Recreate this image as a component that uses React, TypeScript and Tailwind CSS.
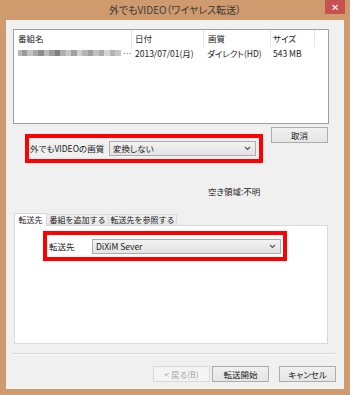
import { ReactNode } from 'react'

const Chevron = () => (
    <svg width="7" height="5" viewBox="0 0 7 5" className="shrink-0">
        <path d="M1 1 L3.5 3.5 L6 1" fill="none" stroke="#555" strokeWidth="1.2" />
    </svg>
)

const Select = ({ value, className }: { value: string; className: string }) => (
    <div
        className={`flex h-[15px] items-center justify-between border border-[#acacac] bg-gradient-to-b from-[#f2f2f2] to-[#e3e3e3] pl-[3px] pr-[4px] ${className}`}
    >
        <span>{value}</span>
        <Chevron />
    </div>
)

const Button = ({ children, className = '' }: { children: ReactNode; className?: string }) => (
    <div
        className={`flex h-[16px] w-[57px] items-center justify-center border border-[#acacac] bg-gradient-to-b from-[#f0f0f0] to-[#e5e5e5] ${className}`}
    >
        {children}
    </div>
)

const blurShades = [
    'w-[4px] bg-[#b8b8b8]',
    'w-[5px] bg-[#9a9a9a]',
    'w-[6px] bg-[#c4c4c4]',
    'w-[5px] bg-[#a8a8a8]',
    'w-[6px] bg-[#8c8c8c]',
    'w-[5px] bg-[#bdbdbd]',
    'w-[6px] bg-[#9c9c9c]',
    'w-[5px] bg-[#7f7f7f]',
    'w-[6px] bg-[#b0b0b0]',
    'w-[5px] bg-[#c8c8c8]',
    'w-[6px] bg-[#a0a0a0]',
    'w-[5px] bg-[#d0d0d0]',
    'w-[6px] bg-[#b5b5b5]',
    'w-[5px] bg-[#9e9e9e]',
    'w-[6px] bg-[#c0c0c0]',
    'w-[5px] bg-[#aaaaaa]',
    'w-[6px] bg-[#d4d4d4]',
    'w-[5px] bg-[#b2b2b2]',
    'w-[6px] bg-[#c6c6c6]',
]

const App = () => {
    return (
        <div className="flex h-[395px] w-[350px] flex-col bg-[#cf9b6e] font-['Noto_Sans_CJK_JP',sans-serif] text-[8.5px] leading-none text-[#222] [font-feature-settings:'palt']">
            {/* title bar */}
            <div className="relative flex h-[20px] shrink-0 items-center justify-center">
                <span className="text-[10px] text-[#3a3a3a]">外でもVIDEO（ワイヤレス転送）</span>
                <div className="absolute right-[5px] top-0 flex h-[14px] w-[20px] items-center justify-center bg-[#c75050] text-[10px] text-white">
                    ✕
                </div>
            </div>

            <div className="mx-[6px] flex h-[369px] flex-col bg-[#f0f0f0]">
                {/* list */}
                <div className="ml-[7px] mt-[9px] flex h-[95px] w-[316px] flex-col border border-[#9a9ea6] bg-white">
                    <div className="flex h-[17px] items-center">
                        <div className="flex h-full w-[118px] items-center border-r border-[#e5e5e5] pl-[4px]">番組名</div>
                        <div className="flex h-full w-[72px] items-center border-r border-[#e5e5e5] pl-[3px]">日付</div>
                        <div className="flex h-full w-[67px] items-center border-r border-[#e5e5e5] pl-[4px]">画質</div>
                        <div className="flex h-full w-[44px] items-center border-r border-[#e5e5e5] pl-[2px]">サイズ</div>
                    </div>
                    <div className="flex h-[12px] items-center">
                        <div className="flex w-[118px] items-center pl-[4px]">
                            <div className="flex h-[6px] blur-[0.6px]">
                                {blurShades.map((c, i) => (
                                    <div key={i} className={`h-full ${c}`} />
                                ))}
                            </div>
                            <span className="ml-[2px] text-[#666]">…</span>
                        </div>
                        <div className="w-[72px] pl-[3px]">2013/07/01(月)</div>
                        <div className="w-[67px] pl-[3px]">ダイレクト(HD)</div>
                        <div className="w-[44px] pl-[2px]">543 MB</div>
                    </div>
                </div>

                {/* quality row */}
                <div className="flex items-start">
                    <div className="ml-[19px] mt-[10px] flex h-[29px] w-[238px] items-center border-[4px] border-[#ff0000] pl-[1px] pr-[3px]">
                        <span className="w-[79px]">外でもVIDEOの画質</span>
                        <Select value="変換しない" className="flex-1" />
                    </div>
                    <Button className="ml-[8px] mt-[3px] h-[15px] w-[56px]">取消</Button>
                </div>

                <div className="mt-[22px] h-[12px] pl-[202px] leading-[12px]">空き領域:不明</div>

                {/* tabs */}
                <div className="ml-[8px] mt-[16px] flex h-[12px] items-end [font-feature-settings:normal] text-[8px]">
                    <div className="relative z-10 -mb-px flex h-[13px] w-[33px] items-center justify-center border border-b-0 border-[#d9d9d9] bg-white">
                        転送先
                    </div>
                    <div className="flex h-[11px] w-[62px] items-center justify-center border border-b-0 border-l-0 border-[#d9d9d9] bg-gradient-to-b from-[#f0f0f0] to-[#e5e5e5]">
                        番組を追加する
                    </div>
                    <div className="flex h-[11px] w-[68px] items-center justify-center border border-b-0 border-l-0 border-[#d9d9d9] bg-gradient-to-b from-[#f0f0f0] to-[#e5e5e5]">
                        転送先を参照する
                    </div>
                </div>
                <div className="ml-[8px] h-[119px] w-[314px] border border-[#d9d9d9] bg-white">
                    <div className="ml-[28px] mt-[5px] flex h-[30px] w-[244px] items-center border-[4px] border-[#ff0000] pl-[2px] pr-[2px]">
                        <span className="w-[43px]">転送先</span>
                        <Select value="DiXiM Sever" className="flex-1" />
                    </div>
                </div>

                {/* separator */}
                <div className="ml-[7px] mt-[9px] w-[322px] border-t border-b border-t-[#d5d5d5] border-b-[#fbfbfb]" />

                {/* footer buttons */}
                <div className="mt-[11px] flex justify-end pr-[8px]">
                    <Button className="border-[#d9d9d9] bg-none bg-[#f4f4f4] text-[#a8a8a8]">&lt; 戻る(B)</Button>
                    <Button className="ml-[2px] border-[#7eb4ea]">転送開始</Button>
                    <Button className="ml-[10px]">キャンセル</Button>
                </div>
            </div>
        </div>
    )
}

export default App
